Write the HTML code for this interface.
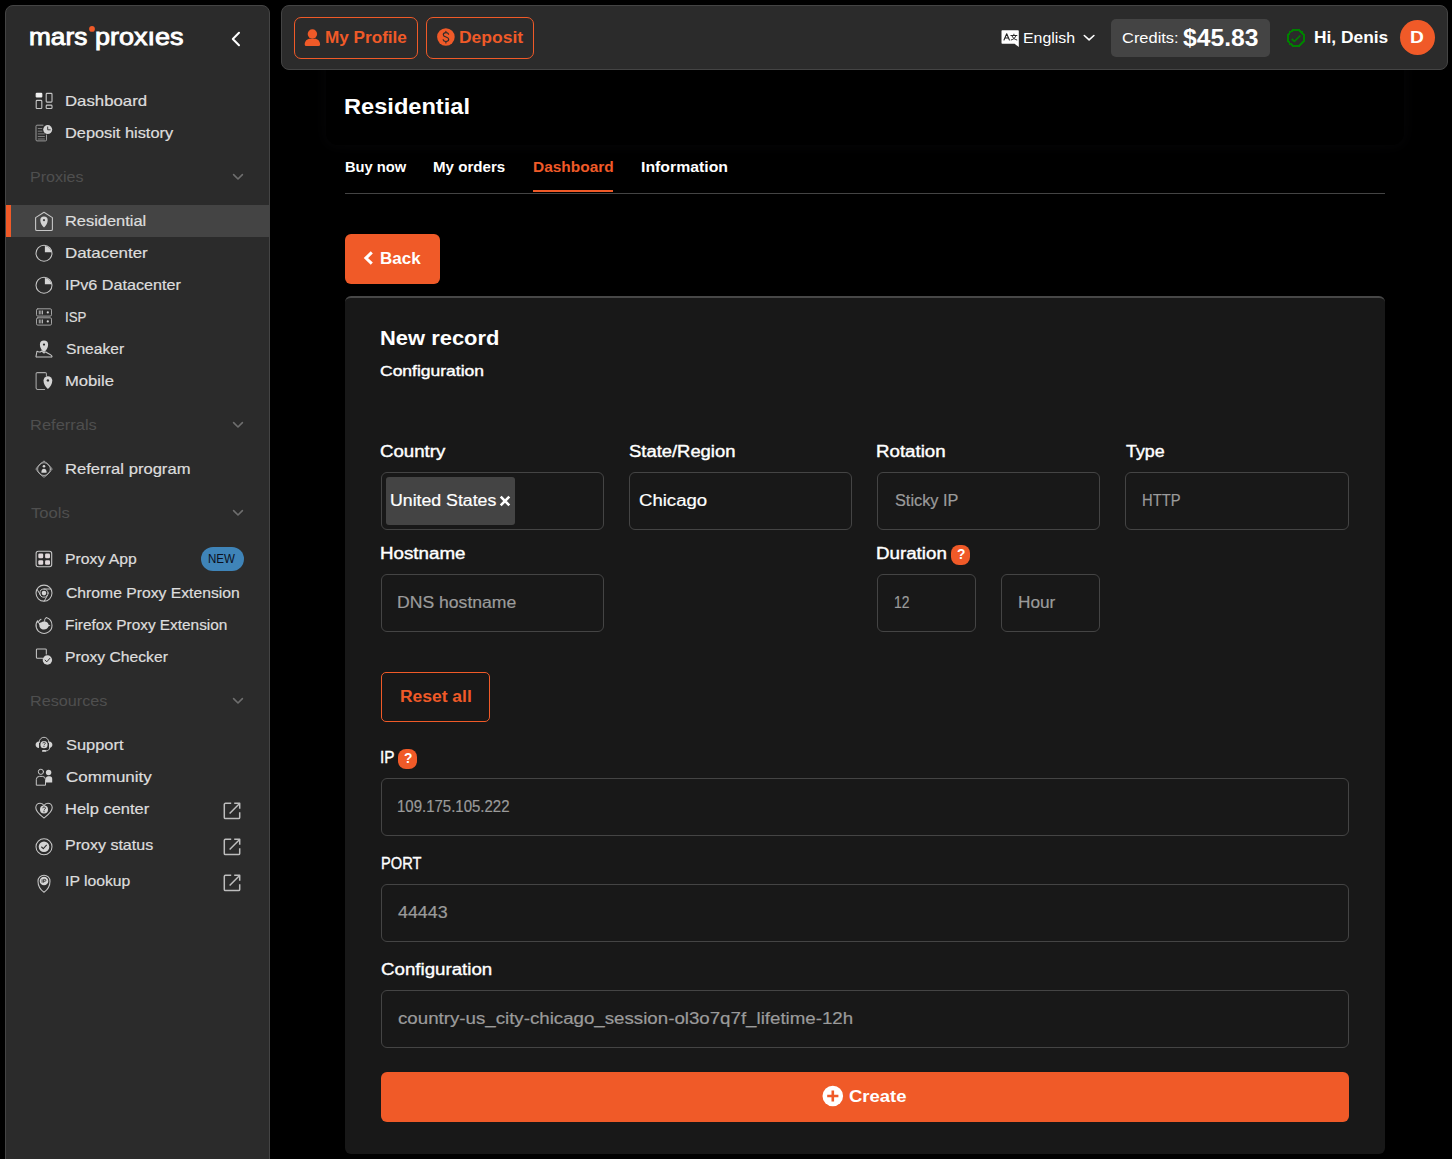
<!DOCTYPE html>
<html><head><meta charset="utf-8"><title>MarsProxies - Residential</title>
<style>
*{box-sizing:border-box;margin:0;padding:0}
html,body{width:1452px;height:1159px;overflow:hidden;background:#000}
body{position:relative;font-family:"Liberation Sans",sans-serif;}
.t{position:absolute;white-space:nowrap;line-height:1;transform-origin:0 50%;}
.abs{position:absolute}
.logo{-webkit-text-stroke:0.9px #fff;letter-spacing:0}
.side{left:5px;top:5px;width:265px;height:1170px;background:#2b2b2b;border:1px solid #444;border-radius:8px 8px 0 0}
.top{left:281px;top:5px;width:1167px;height:65px;background:#2b2b2b;border:1px solid #444;border-radius:8px}
.act{left:6px;top:205px;width:263px;height:32px;background:#444;border-left:5px solid #f05a28}
.obtn{border:1px solid #f05a28;border-radius:7px}
.credits{left:1111px;top:19px;width:159px;height:38px;background:#444;border-radius:5px}
.avatar{left:1400px;top:20px;width:35px;height:35px;border-radius:50%;background:#f05a28}
.hdr{left:326px;top:50px;width:1078px;height:95px;background:#000;border-radius:12px;box-shadow:0 0 12px 3px rgba(150,150,180,0.035)}
.tabline{left:345px;top:193px;width:1040px;height:1px;background:#444}
.tabul{left:533px;top:190px;width:80px;height:2px;background:#f05a28}
.back{left:345px;top:234px;width:95px;height:50px;background:#f05a28;border-radius:6px}
.card{left:345px;top:296px;width:1040px;height:858px;background:#181818;border-radius:6px;border-top:2px solid #474747}
.inp{border:1px solid #444;border-radius:6px;height:58px}
.chip{left:386px;top:477px;width:129px;height:48px;background:#444;border-radius:3px}
.q{width:19px;height:20px;border-radius:8px;background:#f05a28}
.med{-webkit-text-stroke:0.35px #fff}
.sb{-webkit-text-stroke:0.4px #fff}
.nv{-webkit-text-stroke:0.22px #ddd}
.ph{-webkit-text-stroke:0.2px #9b9b9b}
.wv{-webkit-text-stroke:0.2px #fff}
.create{left:381px;top:1072px;width:968px;height:50px;background:#f05a28;border-radius:6px}
.new{left:201px;top:547px;width:43px;height:24px;border-radius:12px;background:#3f84b8}
svg{position:absolute;overflow:visible}
</style></head><body>
<div class="abs hdr"></div>
<div class="abs side"></div>
<div class="abs top"></div>
<div class="abs act"></div>
<div class="abs obtn" style="left:294px;top:17px;width:124px;height:42px"></div>
<div class="abs obtn" style="left:426px;top:17px;width:108px;height:42px"></div>
<div class="abs credits"></div>
<div class="abs avatar"></div>
<div class="abs tabline"></div>
<div class="abs tabul"></div>
<div class="abs back"></div>
<div class="abs card"></div>
<div class="abs inp" style="left:381px;top:472px;width:223px"></div>
<div class="abs inp" style="left:629px;top:472px;width:223px"></div>
<div class="abs inp" style="left:877px;top:472px;width:223px"></div>
<div class="abs inp" style="left:1125px;top:472px;width:224px"></div>
<div class="abs chip"></div>
<div class="abs inp" style="left:381px;top:574px;width:223px"></div>
<div class="abs inp" style="left:877px;top:574px;width:99px"></div>
<div class="abs inp" style="left:1001px;top:574px;width:99px"></div>
<div class="abs q" style="left:951px;top:545px"></div>
<div class="abs obtn" style="left:381px;top:672px;width:109px;height:50px;border-radius:5px"></div>
<div class="abs q" style="left:398px;top:749px"></div>
<div class="abs inp" style="left:381px;top:778px;width:968px"></div>
<div class="abs inp" style="left:381px;top:884px;width:968px"></div>
<div class="abs inp" style="left:381px;top:990px;width:968px"></div>
<div class="abs create"></div>
<div class="abs new"></div>
<svg class="abs" style="left:0;top:0" width="1452" height="1159" viewBox="0 0 1452 1159" fill="none" stroke-linecap="round" stroke-linejoin="round">
<circle cx="92" cy="28.9" r="2.9" fill="#f05a28"/>
<path d="M239,32.8 L232.8,39 L239,45.2" stroke="#fff" stroke-width="2"/>
<path d="M233.6,174.6 L238,179 L242.4,174.6" stroke="#6e6e6e" stroke-width="1.6"/>
<path d="M233.6,422.6 L238,427 L242.4,422.6" stroke="#6e6e6e" stroke-width="1.6"/>
<path d="M233.6,510.6 L238,515 L242.4,510.6" stroke="#6e6e6e" stroke-width="1.6"/>
<path d="M233.6,698.6 L238,703 L242.4,698.6" stroke="#6e6e6e" stroke-width="1.6"/>
<g stroke="#c6c6c6" stroke-width="1.1">
<rect x="36.2" y="93.4" width="5.6" height="3.6" rx="0.6" fill="#f2f2f2" stroke="#f2f2f2"/>
<rect x="36.2" y="100.4" width="5.6" height="8.1" rx="0.8"/>
<rect x="46.2" y="93.4" width="5.8" height="8.7" rx="0.8"/>
<rect x="46.2" y="105.1" width="5.8" height="3.4" rx="0.8"/>
</g>
<g stroke="#9a9a9a" stroke-width="1">
<path d="M43,125.2 H37 a1,1 0 0 0 -1,1 V139.9 a1,1 0 0 0 1,1 H45.5 a1,1 0 0 0 1,-1 V135"/>
<path d="M37.8,128.5H42.2M37.8,131.2H42.4M37.8,133.9H44.8M37.8,136.5H44.8M37.8,139H44.8" stroke-width="0.75" stroke-linecap="butt"/>
</g>
<circle cx="47.7" cy="129.6" r="4.5" fill="#d4d4d4"/>
<path d="M47.7,127 V129.8 H50.2" stroke="#2b2b2b" stroke-width="0.9"/>
<path d="M44,212.3 L52.4,217.6 V229.2 a1.3,1.3 0 0 1 -1.3,1.3 H36.9 a1.3,1.3 0 0 1 -1.3,-1.3 V217.6 Z" stroke="#c6c6c6" stroke-width="1.1"/>
<path d="M44,227.4 C41.97,225.56 40.3,222.97 40.3,220.2 A3.7,3.7 0 1 1 47.7,220.2 C47.7,222.97 46.03,225.56 44,227.4Z" fill="#d4d4d4" stroke="none" stroke-width="0"/>
<circle cx="44" cy="220.2" r="1.1" fill="#444"/>
<circle cx="44" cy="253.2" r="8" stroke="#c6c6c6" stroke-width="1.05"/>
<path d="M44.9,252.29999999999998 V245.89999999999998 A6.8,6.8 0 0 1 51.3,252.29999999999998 Z" fill="#d4d4d4"/>
<circle cx="44" cy="285.2" r="8" stroke="#c6c6c6" stroke-width="1.05"/>
<path d="M44.9,284.3 V277.9 A6.8,6.8 0 0 1 51.3,284.3 Z" fill="#d4d4d4"/>
<g stroke="#a2a2a2" stroke-width="1"><rect x="36.5" y="308.8" width="15" height="7.3" rx="1.3"/><path d="M39.3,310.5V314.40000000000003M40.9,310.5V314.40000000000003M42.5,310.5V314.40000000000003" stroke="#c0c0c0" stroke-width="0.9" stroke-linecap="butt"/></g><circle cx="47.8" cy="312.45" r="1.1" fill="#d4d4d4"/>
<g stroke="#a2a2a2" stroke-width="1"><rect x="36.5" y="317.8" width="15" height="7.3" rx="1.3"/><path d="M39.3,319.5V323.40000000000003M40.9,319.5V323.40000000000003M42.5,319.5V323.40000000000003" stroke="#c0c0c0" stroke-width="0.9" stroke-linecap="butt"/></g><circle cx="47.8" cy="321.45" r="1.1" fill="#d4d4d4"/>
<path d="M44,352.2 C41.74,350.64 39.9,347.77 39.9,344.7 A4.1,4.1 0 1 1 48.1,344.7 C48.1,347.77 46.26,350.64 44,352.2Z" fill="#d4d4d4" stroke="none" stroke-width="0"/>
<circle cx="44" cy="344.6" r="1.1" fill="#2b2b2b"/>
<path d="M37,351.2 L36,356.3 a0.7,0.7 0 0 0 .7,.8 H51.3 a0.7,0.7 0 0 0 .6,-1.1 C50.5,354.2 47.5,353.6 45.8,351.9 L44,353 L41.7,351 C40.2,352.4 38.5,352.3 37,351.2Z" stroke="#c6c6c6" stroke-width="1.05"/>
<path d="M46.4,376 V373.9 a1.3,1.3 0 0 0 -1.3,-1.3 H37.4 a1.3,1.3 0 0 0 -1.3,1.3 V388.1 a1.3,1.3 0 0 0 1.3,1.3 H44.6" stroke="#a8a8a8" stroke-width="1.05"/>
<path d="M47.9,389 C45.48,386.98 43.5,383.90 43.5,380.6 A4.4,4.4 0 1 1 52.3,380.6 C52.3,383.90 50.32,386.98 47.9,389Z" fill="#d4d4d4" stroke="none" stroke-width="0"/>
<circle cx="47.9" cy="380.4" r="1.2" fill="#2b2b2b"/>
<circle cx="44" cy="469.1" r="6.4" stroke="#d0d0d0" stroke-width="0.75"/>
<path d="M42.94,461.56 Q44.00,460.50 45.06,461.56 L51.54,468.04 Q52.60,469.10 51.54,470.16 L45.06,476.64 Q44.00,477.70 42.94,476.64 L36.46,470.16 Q35.40,469.10 36.46,468.04 Z" stroke="#d0d0d0" stroke-width="0.7"/>
<circle cx="44" cy="466.2" r="1.3" fill="#d4d4d4"/><path d="M41.4,472.7 C41.3,470.2 42.3,468.7 44,468.7 C45.7,468.7 46.7,470.2 46.6,472.7Z" fill="#d4d4d4"/>
<rect x="36.1" y="551.2" width="15.6" height="15.6" rx="2.2" stroke="#c6c6c6" stroke-width="1.1"/>
<rect x="38.3" y="553.6" width="4.9" height="4.6" rx="1.2" fill="#e0d8da"/>
<rect x="38.3" y="560.2" width="4.9" height="4.6" rx="1.2" fill="#e0d8da"/>
<rect x="45.1" y="553.6" width="4.9" height="4.6" rx="1.2" fill="#e0d8da"/>
<rect x="45.1" y="560.2" width="4.9" height="4.6" rx="1.2" fill="#e0d8da"/>
<circle cx="44" cy="593.1" r="8" stroke="#c6c6c6" stroke-width="1.05"/>
<circle cx="44" cy="593.1" r="4.1" stroke="#c6c6c6" stroke-width="1"/>
<circle cx="44" cy="593.1" r="2.3" fill="#d4d4d4"/>
<path d="M44,589 H51 M40.45,595.15 L37.1,589.3 M47.55,595.15 L44.3,601" stroke="#c6c6c6" stroke-width="1"/>
<path d="M46.2,617.6 C44.6,618.9 44.2,620 44.6,621.3 M46.2,617.6 C49.8,618.7 52,621.6 52,625.4 A8,8 0 1 1 37.5,620.7 C37.5,621.6 37.8,622.2 38.3,622.6 C38.6,621 39.6,619.9 41,619.3" stroke="#c6c6c6" stroke-width="1.05"/>
<path d="M38.6,623.6 C40,622.4 42,622.6 43,621.6 C46.5,621 48.6,623 48.4,624.6 L50.4,625.6 L48.4,626.6 C47.8,628.6 46,629.6 44,629.6 C41,629.6 39.2,627.4 39.4,625.2 C39.2,624.6 38.8,624.2 38.6,623.6Z" fill="#d4d4d4"/>
<path d="M46.3,654 V650 a1.1,1.1 0 0 0 -1.1,-1.1 H37.5 a1.1,1.1 0 0 0 -1.1,1.1 V657.2 a1.1,1.1 0 0 0 1.1,1.1 H42.6" stroke="#c6c6c6" stroke-width="1.05"/>
<circle cx="47.4" cy="660" r="4.7" fill="#d4d4d4"/>
<path d="M45.1,660.2 L46.8,661.8 L49.8,658.4" stroke="#2b2b2b" stroke-width="1"/>
<path d="M39.3,742.6 V742 a4.7,4.7 0 0 1 9.4,0 V742.6" stroke="#c6c6c6" stroke-width="0.95"/>
<path d="M39,741.4 V747.9 C36.9,747.9 35.6,746.5 35.6,744.65 C35.6,742.8 36.9,741.4 39,741.4Z M49,741.4 V747.9 C51.1,747.9 52.4,746.5 52.4,744.65 C52.4,742.8 51.1,741.4 49,741.4Z" fill="#d4d4d4"/>
<circle cx="44" cy="744.7" r="3.6" fill="#d4d4d4"/>
<path d="M49.7,747.9 C49.6,749.9 47.9,750.9 46,750.9" stroke="#c6c6c6" stroke-width="0.9"/><rect x="42" y="750" width="4.2" height="1.8" rx="0.9" fill="#d4d4d4"/>
<path d="M42.88,743.37 a1.17,1.17 0 1 1 1.75,0.99 c-0.41,0.27 -0.63,0.50 -0.63,0.95" stroke="#2b2b2b" stroke-width="0.85" stroke-linecap="butt"/><circle cx="44" cy="746.47" r="0.54" fill="#2b2b2b"/>
<circle cx="40.9" cy="771.8" r="2.6" stroke="#c6c6c6" stroke-width="1"/>
<path d="M36.3,784.8 V779.6 a3.2,3.2 0 0 1 3.2,-3.2 H42.3 a3.2,3.2 0 0 1 3.2,3.2 V784.8 Z" stroke="#c6c6c6" stroke-width="1"/>
<circle cx="48.6" cy="772.5" r="2.7" fill="#d4d4d4"/>
<path d="M45.8,782.6 V778.8 a2.6,2.6 0 0 1 2.6,-2.6 H49.6 a2.6,2.6 0 0 1 2.6,2.6 V782.6 Z" fill="#d4d4d4"/>
<path d="M44,818 C40.5,815.2 35.8,812 35.8,807.8 C35.8,805 37.8,803.2 40.1,803.2 C41.8,803.2 43.2,804.1 44,805.6 C44.8,804.1 46.2,803.2 47.9,803.2 C50.2,803.2 52.2,805 52.2,807.8 C52.2,812 47.5,815.2 44,818Z" stroke="#c6c6c6" stroke-width="1.05"/>
<circle cx="44" cy="809.6" r="4" fill="#d4d4d4"/>
<path d="M42.75,808.25 a1.30,1.30 0 1 1 1.95,1.10 c-0.45,0.30 -0.70,0.55 -0.70,1.05" stroke="#2b2b2b" stroke-width="0.95" stroke-linecap="butt"/><circle cx="44" cy="811.70" r="0.60" fill="#2b2b2b"/>
<circle cx="44" cy="846.8" r="8" stroke="#c6c6c6" stroke-width="1.05"/>
<circle cx="44" cy="846.8" r="5.3" fill="#d4d4d4"/>
<path d="M41.6,847 L43.3,848.6 L46.5,845.2" stroke="#2b2b2b" stroke-width="1.05"/>
<path d="M44,892.2 C40.70,889.90 38,885.70 38,881.2 A6,6 0 1 1 50,881.2 C50,885.70 47.30,889.90 44,892.2Z" fill="none" stroke="#c6c6c6" stroke-width="1.05"/>
<circle cx="44" cy="881" r="4.3" fill="#d4d4d4"/>
<path d="M42.1,879.3 V882.7 M43.6,882.7 V879.3 h1.3 a1,1 0 0 1 0,2 h-1.3" stroke="#2b2b2b" stroke-width="0.85" stroke-linecap="butt"/>
<g stroke="#bdbdbd" stroke-width="1.5" stroke-linecap="butt"><path d="M231.2,803.35 H225.4 a1.1,1.1 0 0 0 -1.1,1.1 V817.4 a1.1,1.1 0 0 0 1.1,1.1 H238.6 a1.1,1.1 0 0 0 1.1,-1.1 V812.2"/><path d="M229.6,813.5 L239.6,803.5 M234.2,803.35 H239.7 V808.8000000000001"/></g>
<g stroke="#bdbdbd" stroke-width="1.5" stroke-linecap="butt"><path d="M231.2,839.35 H225.4 a1.1,1.1 0 0 0 -1.1,1.1 V853.4 a1.1,1.1 0 0 0 1.1,1.1 H238.6 a1.1,1.1 0 0 0 1.1,-1.1 V848.2"/><path d="M229.6,849.5 L239.6,839.5 M234.2,839.35 H239.7 V844.8000000000001"/></g>
<g stroke="#bdbdbd" stroke-width="1.5" stroke-linecap="butt"><path d="M231.2,875.35 H225.4 a1.1,1.1 0 0 0 -1.1,1.1 V889.4 a1.1,1.1 0 0 0 1.1,1.1 H238.6 a1.1,1.1 0 0 0 1.1,-1.1 V884.2"/><path d="M229.6,885.5 L239.6,875.5 M234.2,875.35 H239.7 V880.8000000000001"/></g>
<circle cx="312.4" cy="34" r="4.7" fill="#f05a28"/>
<path d="M304.7,44.4 C304.7,41 307,38.7 310.2,38.7 H314.6 C317.8,38.7 320.1,41 320.1,44.4 a1.7,1.7 0 0 1 -1.7,1.7 H306.4 a1.7,1.7 0 0 1 -1.7,-1.7Z" fill="#f05a28"/>
<circle cx="445.9" cy="37" r="8.8" fill="#f05a28"/>
<path d="M448.6,34.2 C448.2,33 447,32.6 445.9,32.6 C444.4,32.6 443.3,33.4 443.3,34.7 C443.3,37.6 448.7,36.4 448.7,39.3 C448.7,40.7 447.4,41.5 445.9,41.5 C444.5,41.5 443.4,40.9 443.1,39.7 M445.9,31.2 V32.6 M445.9,41.5 V42.9" stroke="#2b2b2b" stroke-width="1.15"/>
<path d="M1002.3,30.2 H1018 a.8,.8 0 0 1 .8,.8 V47 L1014.6,43.8 H1002.3 a.8,.8 0 0 1 -.8,-.8 V31 a.8,.8 0 0 1 .8,-.8Z" fill="#fff"/>
<path d="M1004,40 L1006.7,33.8 L1009.4,40 M1004.9,38 H1008.5" stroke="#222" stroke-width="1.1"/>
<path d="M1010.9,35.5 H1016.9 M1013.9,34.2 V35.5 M1015.9,35.5 C1015.5,37.6 1013.8,39.3 1011.2,40 M1012,35.8 C1012.5,37.6 1014.2,39.3 1016.8,40" stroke="#222" stroke-width="0.95"/>
<path d="M1084.3,35.5 L1089.1,39.9 L1093.9,35.5" stroke="#fff" stroke-width="1.6"/>
<g shape-rendering="crispEdges"><circle cx="1296" cy="38" r="8.2" stroke="#008000" stroke-width="2"/></g>
<path d="M1291.8,39 L1294.4,41.3 L1300.4,35.5" stroke="#008000" stroke-width="1.7" stroke-linecap="butt" stroke-linejoin="miter"/>
<path d="M371.8,252.4 L365.9,258.05 L371.8,263.7" stroke="#fff" stroke-width="3" stroke-linecap="butt" stroke-linejoin="miter"/>
<path d="M500.7,496.7 L509.3,505.3 M509.3,496.7 L500.7,505.3" stroke="#fff" stroke-width="2.6" stroke-linecap="butt"/>
<circle cx="832.8" cy="1096" r="10.3" fill="#fff"/>
<path d="M827.2,1096 H838.4 M832.8,1090.4 V1101.6" stroke="#f05a28" stroke-width="2.6" stroke-linecap="butt"/>
</svg>
<span class="t nv" style="left:65.1px;top:93.0px;font-size:15px;color:#dddddd;transform:scaleX(1.1182);">Dashboard</span>
<span class="t nv" style="left:65.1px;top:125.0px;font-size:15px;color:#dddddd;transform:scaleX(1.0894);">Deposit history</span>
<span class="t nv" style="left:65.1px;top:213.0px;font-size:15px;color:#dddddd;transform:scaleX(1.0937);">Residential</span>
<span class="t nv" style="left:65.1px;top:245.0px;font-size:15px;color:#dddddd;transform:scaleX(1.1271);">Datacenter</span>
<span class="t nv" style="left:65.1px;top:277.0px;font-size:15px;color:#dddddd;transform:scaleX(1.0780);">IPv6 Datacenter</span>
<span class="t nv" style="left:65.4px;top:309.0px;font-size:15px;color:#dddddd;transform:scaleX(0.8849);">ISP</span>
<span class="t nv" style="left:65.9px;top:341.0px;font-size:15px;color:#dddddd;transform:scaleX(1.0411);">Sneaker</span>
<span class="t nv" style="left:65.1px;top:373.0px;font-size:15px;color:#dddddd;transform:scaleX(1.1083);">Mobile</span>
<span class="t nv" style="left:65.1px;top:461.0px;font-size:15px;color:#dddddd;transform:scaleX(1.1066);">Referral program</span>
<span class="t nv" style="left:65.2px;top:551.0px;font-size:15px;color:#dddddd;transform:scaleX(1.0501);">Proxy App</span>
<span class="t nv" style="left:65.7px;top:585.0px;font-size:15px;color:#dddddd;transform:scaleX(1.0471);">Chrome Proxy Extension</span>
<span class="t nv" style="left:65.2px;top:617.0px;font-size:15px;color:#dddddd;transform:scaleX(1.0251);">Firefox Proxy Extension</span>
<span class="t nv" style="left:65.2px;top:649.0px;font-size:15px;color:#dddddd;transform:scaleX(1.0461);">Proxy Checker</span>
<span class="t nv" style="left:65.9px;top:737.0px;font-size:15px;color:#dddddd;transform:scaleX(1.0936);">Support</span>
<span class="t nv" style="left:65.6px;top:769.0px;font-size:15px;color:#dddddd;transform:scaleX(1.1298);">Community</span>
<span class="t nv" style="left:65.1px;top:801.0px;font-size:15px;color:#dddddd;transform:scaleX(1.0972);">Help center</span>
<span class="t nv" style="left:65.1px;top:837.0px;font-size:15px;color:#dddddd;transform:scaleX(1.0681);">Proxy status</span>
<span class="t nv" style="left:65.2px;top:873.0px;font-size:15px;color:#dddddd;transform:scaleX(1.0500);">IP lookup</span>
<span class="t" style="left:29.7px;top:169.0px;font-size:15px;color:#4f4f4f;transform:scaleX(1.0708);">Proxies</span>
<span class="t" style="left:29.7px;top:417.0px;font-size:15px;color:#4f4f4f;transform:scaleX(1.0978);">Referrals</span>
<span class="t" style="left:30.7px;top:505.0px;font-size:15px;color:#4f4f4f;transform:scaleX(1.1074);">Tools</span>
<span class="t" style="left:29.7px;top:693.0px;font-size:15px;color:#4f4f4f;transform:scaleX(1.0806);">Resources</span>
<span class="t" style="left:208.0px;top:553.0px;font-size:12px;color:#0b1020;transform:scaleX(0.9623);">NEW</span>
<span class="t logo" style="left:29.4px;top:25.0px;font-size:24px;color:#fff;transform:scaleX(1.0924);">mars</span>
<span class="t logo" style="left:95.3px;top:25.0px;font-size:24px;color:#fff;transform:scaleX(1.1249);">proxıes</span>
<span class="t" style="left:325.1px;top:30.0px;font-size:16px;color:#f05a28;font-weight:700;transform:scaleX(1.0711);">My Profile</span>
<span class="t" style="left:459.0px;top:30.0px;font-size:16px;color:#f05a28;font-weight:700;transform:scaleX(1.0921);">Deposit</span>
<span class="t" style="left:1022.8px;top:30.0px;font-size:15px;color:#fff;transform:scaleX(1.0597);">English</span>
<span class="t" style="left:1121.8px;top:30.0px;font-size:15px;color:#fff;transform:scaleX(1.0963);">Credits:</span>
<span class="t" style="left:1183.4px;top:26.0px;font-size:24px;color:#fff;font-weight:700;transform:scaleX(1.0274);">$45.83</span>
<span class="t" style="left:1314.0px;top:30.0px;font-size:16px;color:#fff;font-weight:700;transform:scaleX(1.0836);">Hi, Denis</span>
<span class="t" style="left:1410.3px;top:30.0px;font-size:16px;color:#fff;font-weight:700;transform:scaleX(1.2000);">D</span>
<span class="t" style="left:343.9px;top:96.0px;font-size:22px;color:#fff;font-weight:700;transform:scaleX(1.0733);">Residential</span>
<span class="t" style="left:344.5px;top:159.0px;font-size:15px;color:#fff;font-weight:700;transform:scaleX(0.9803);">Buy now</span>
<span class="t" style="left:433.3px;top:159.0px;font-size:15px;color:#fff;font-weight:700;transform:scaleX(1.0065);">My orders</span>
<span class="t" style="left:533.2px;top:159.0px;font-size:15px;color:#f05a28;font-weight:700;transform:scaleX(1.0307);">Dashboard</span>
<span class="t" style="left:640.8px;top:159.0px;font-size:15px;color:#fff;font-weight:700;transform:scaleX(1.0541);">Information</span>
<span class="t" style="left:379.7px;top:251.0px;font-size:16px;color:#fff;font-weight:700;transform:scaleX(1.0629);">Back</span>
<span class="t" style="left:379.8px;top:328.0px;font-size:20px;color:#fff;font-weight:700;transform:scaleX(1.0959);">New record</span>
<span class="t sb" style="left:380.2px;top:363.0px;font-size:15px;color:#fff;transform:scaleX(1.1656);">Configuration</span>
<span class="t sb" style="left:380.3px;top:444.0px;font-size:16px;color:#fff;transform:scaleX(1.1651);">Country</span>
<span class="t sb" style="left:629.3px;top:444.0px;font-size:16px;color:#fff;transform:scaleX(1.1503);">State/Region</span>
<span class="t sb" style="left:876.3px;top:444.0px;font-size:16px;color:#fff;transform:scaleX(1.1681);">Rotation</span>
<span class="t sb" style="left:1126.4px;top:444.0px;font-size:16px;color:#fff;transform:scaleX(1.1128);">Type</span>
<span class="t sb" style="left:379.7px;top:546.0px;font-size:16px;color:#fff;transform:scaleX(1.1714);">Hostname</span>
<span class="t sb" style="left:876.3px;top:546.0px;font-size:16px;color:#fff;transform:scaleX(1.1710);">Duration</span>
<span class="t wv" style="left:390.4px;top:493.0px;font-size:16px;color:#fff;transform:scaleX(1.1062);">United States</span>
<span class="t wv" style="left:638.7px;top:493.0px;font-size:16px;color:#fff;transform:scaleX(1.1605);">Chicago</span>
<span class="t ph" style="left:894.5px;top:493.0px;font-size:16px;color:#9b9b9b;transform:scaleX(1.0186);">Sticky IP</span>
<span class="t ph" style="left:1141.9px;top:493.0px;font-size:16px;color:#9b9b9b;transform:scaleX(0.9209);">HTTP</span>
<span class="t ph" style="left:396.7px;top:595.0px;font-size:16px;color:#9b9b9b;transform:scaleX(1.0995);">DNS hostname</span>
<span class="t ph" style="left:894.1px;top:595.0px;font-size:16px;color:#9b9b9b;transform:scaleX(0.8670);">12</span>
<span class="t ph" style="left:1018.1px;top:595.0px;font-size:16px;color:#9b9b9b;transform:scaleX(1.0764);">Hour</span>
<span class="t" style="left:399.8px;top:689.0px;font-size:16px;color:#f05a28;font-weight:700;transform:scaleX(1.0898);">Reset all</span>
<span class="t med" style="left:380.4px;top:750.0px;font-size:16px;color:#fff;transform:scaleX(0.9625);">IP</span>
<span class="t med" style="left:380.5px;top:856.0px;font-size:16px;color:#fff;transform:scaleX(0.9148);">PORT</span>
<span class="t med" style="left:380.7px;top:962.0px;font-size:16px;color:#fff;transform:scaleX(1.1687);">Configuration</span>
<span class="t ph" style="left:397.3px;top:799.0px;font-size:16px;color:#9b9b9b;transform:scaleX(0.9370);">109.175.105.222</span>
<span class="t ph" style="left:397.9px;top:905.0px;font-size:16px;color:#9b9b9b;transform:scaleX(1.1148);">44443</span>
<span class="t ph" style="left:397.6px;top:1011.0px;font-size:16px;color:#9b9b9b;transform:scaleX(1.1684);">country-us_city-chicago_session-ol3o7q7f_lifetime-12h</span>
<span class="t" style="left:849.0px;top:1089.0px;font-size:16px;color:#fff;font-weight:700;transform:scaleX(1.1532);">Create</span>
<span class="t" style="left:956.5px;top:547.0px;font-size:14px;color:#fff;font-weight:700;transform:scaleX(0.9815);">?</span>
<span class="t" style="left:403.5px;top:751.0px;font-size:14px;color:#fff;font-weight:700;transform:scaleX(0.9815);">?</span>
</body></html>
